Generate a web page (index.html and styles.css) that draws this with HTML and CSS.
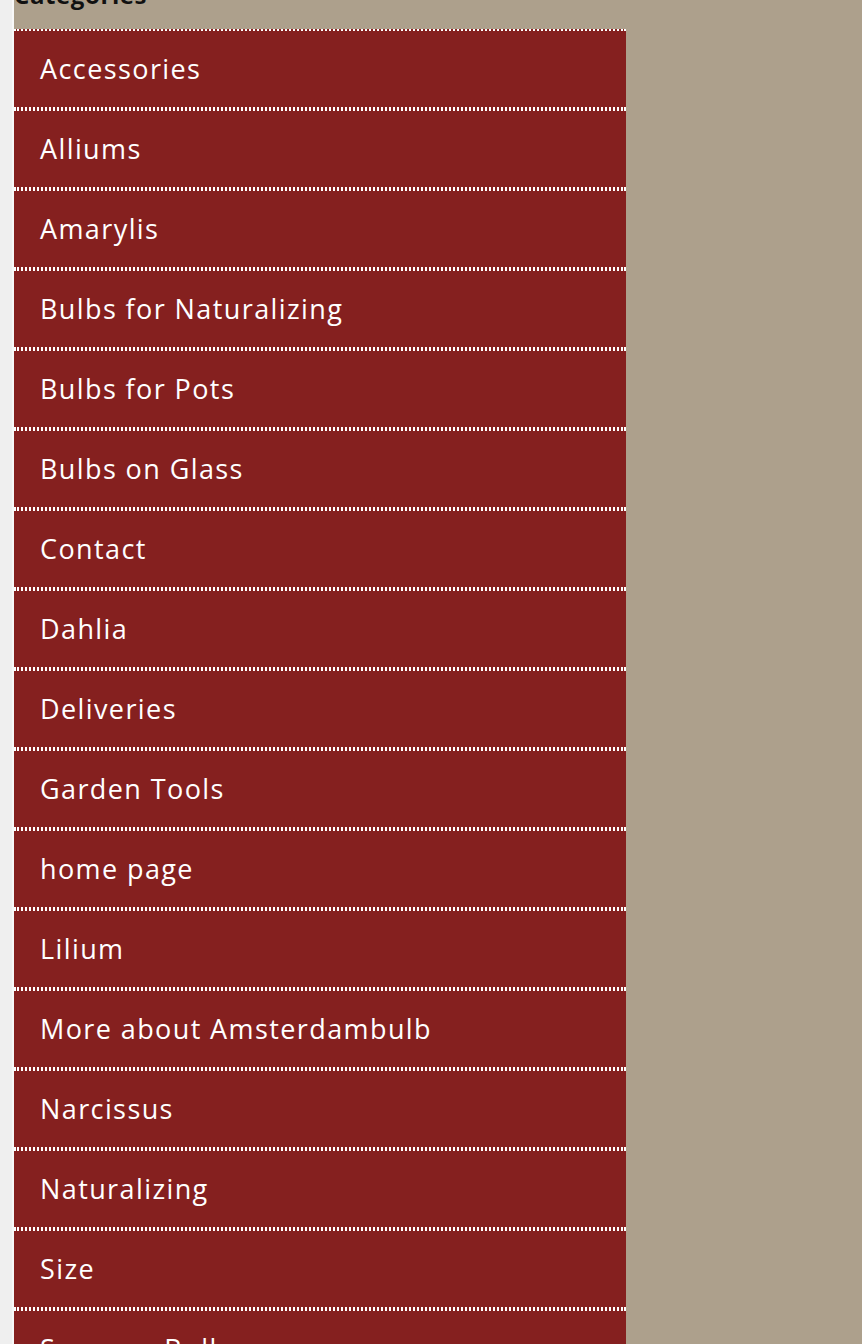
FILE: index.html
```html
<!DOCTYPE html>
<html lang="en">
<head>
<meta charset="utf-8">
<title>Categories</title>
<link rel="stylesheet" href="styles.css">
</head>
<body>
<div class="page">
  <aside class="widget">
    <h2 class="widget-title">Categories</h2>
    <ul class="cat-list">
      <li><a href="#">Accessories</a></li>
      <li><a href="#">Alliums</a></li>
      <li><a href="#">Amarylis</a></li>
      <li><a href="#">Bulbs for Naturalizing</a></li>
      <li><a href="#">Bulbs for Pots</a></li>
      <li><a href="#">Bulbs on Glass</a></li>
      <li><a href="#">Contact</a></li>
      <li><a href="#">Dahlia</a></li>
      <li><a href="#">Deliveries</a></li>
      <li><a href="#">Garden Tools</a></li>
      <li><a href="#">home page</a></li>
      <li><a href="#">Lilium</a></li>
      <li><a href="#">More about Amsterdambulb</a></li>
      <li><a href="#">Narcissus</a></li>
      <li><a href="#">Naturalizing</a></li>
      <li><a href="#">Size</a></li>
      <li><a href="#">Summer Bulbs</a></li>
      <li><a href="#">Tulips</a></li>
    </ul>
  </aside>
</div>
</body>
</html>
```
FILE: styles.css
```css
html, body {
  margin: 0;
  padding: 0;
}
body {
  background: #efefef;
  font-family: "Open Sans", "Liberation Sans", sans-serif;
  overflow: hidden;
  height: 1344px;
}
.page {
  margin-left: 12px;
  border-left: 2px solid #f8f8f8;
  background: #ada08c;
  min-height: 1344px;
}
.widget {
  width: 612px;
  margin-top: -18px;
}
.widget-title {
  margin: 0 0 21px;
  font-size: 24px;
  line-height: 26px;
  font-weight: 700;
  letter-spacing: 0.6px;
  color: #111;
}
.cat-list {
  list-style: none;
  margin: 0;
  padding: 0;
  background: #85201f;
}
.cat-list li {
  border-top: 2px dotted #fff;
  border-bottom: 2px dotted #fff;
  height: 74px;
  padding-bottom: 2px;
  display: flex;
  align-items: center;
}
.cat-list a {
  padding-left: 26px;
  color: #fff;
  text-decoration: none;
  font-size: 27px;
  font-weight: 400;
  letter-spacing: 1.4px;
}
```
